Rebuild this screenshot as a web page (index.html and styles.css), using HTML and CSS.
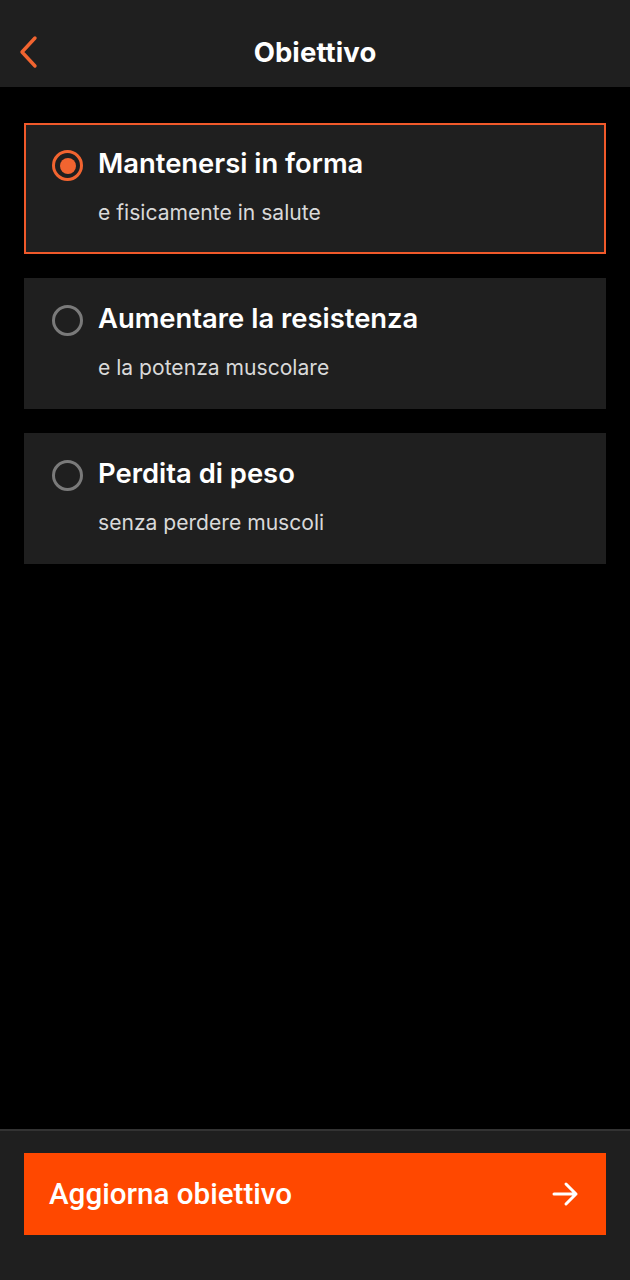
FILE: index.html
```html
<!DOCTYPE html>
<html lang="it">
<head>
<meta charset="utf-8">
<title>Obiettivo</title>
<link rel="stylesheet" href="styles.css">
</head>
<body>
<div class="app">
  <header class="topbar">
    <button class="back" aria-label="Indietro">
      <svg width="22" height="34" viewBox="0 0 22 34"><path d="M17 3 L4 17 L17 31" fill="none" stroke="#f26430" stroke-width="3.4" stroke-linecap="round" stroke-linejoin="round"/></svg>
    </button>
    <h1 class="title">Obiettivo</h1>
  </header>
  <main class="list">
    <div class="card selected">
      <span class="radio on"></span>
      <div class="texts">
        <div class="head">Mantenersi in forma</div>
        <div class="sub">e fisicamente in salute</div>
      </div>
    </div>
    <div class="card">
      <span class="radio"></span>
      <div class="texts">
        <div class="head">Aumentare la resistenza</div>
        <div class="sub">e la potenza muscolare</div>
      </div>
    </div>
    <div class="card">
      <span class="radio"></span>
      <div class="texts">
        <div class="head">Perdita di peso</div>
        <div class="sub">senza perdere muscoli</div>
      </div>
    </div>
  </main>
  <footer class="footer">
    <button class="cta">
      <span>Aggiorna obiettivo</span>
      <svg width="28" height="26" viewBox="0 0 28 26"><path d="M2 13 H24 M14 3 L24 13 L14 23" fill="none" stroke="#fff" stroke-width="3" stroke-linecap="round" stroke-linejoin="round"/></svg>
    </button>
  </footer>
</div>
</body>
</html>
```

FILE: styles.css
```css
* { box-sizing: border-box; }
html, body { margin: 0; padding: 0; background: #000; }
body { font-family: Inter, "Noto Sans", sans-serif; color: #fff; }
.app { width: 630px; height: 1280px; display: flex; flex-direction: column; }
.topbar {
  height: 87px; background: #1f1f1f; position: relative;
  display: flex; align-items: center; justify-content: center;
}
.back {
  position: absolute; left: 18px; top: 35px; padding: 0; margin: 0;
  background: none; border: 0; width: 22px; height: 34px; display: block;
}
.back svg { display: block; }
.title { margin: 0; font-size: 27.5px; font-weight: 700; letter-spacing: 0.1px; padding-top: 16px; }
.list { flex: 1; padding: 36px 24px 0; display: flex; flex-direction: column; gap: 24px; }
.card {
  height: 131px; background: #1f1f1f; border: 2px solid transparent;
  display: flex; align-items: flex-start; padding: 22px 0 0 26px; gap: 15px;
}
.card.selected { border-color: #f0592a; }
.radio {
  width: 31px; height: 31px; border-radius: 50%; border: 3px solid #7a7a7a;
  flex: none; margin-top: 3px; position: relative;
}
.radio.on { border-color: #f26430; }
.radio.on::after {
  content: ""; position: absolute; left: 4.5px; top: 4.5px; width: 16px; height: 16px;
  border-radius: 50%; background: #f26430;
}
.texts { display: flex; flex-direction: column; }
.head { font-size: 27.4px; font-weight: 600; line-height: 32px; }
.sub { font-size: 21.1px; line-height: 26px; color: #d9d9d9; margin-top: 21px; }
.footer {
  height: 151px; background: #1f1f1f; border-top: 2px solid #333;
  padding: 22px 24px 0;
}
.cta {
  width: 100%; height: 82px; background: #ff4800; border: 0; color: #fff;
  display: flex; align-items: center; justify-content: space-between;
  padding: 0 26px 0 25px; font-family: Roboto, "Noto Sans", sans-serif;
  font-size: 29.6px; font-weight: 500; cursor: pointer;
}
.cta svg { display: block; }
```
